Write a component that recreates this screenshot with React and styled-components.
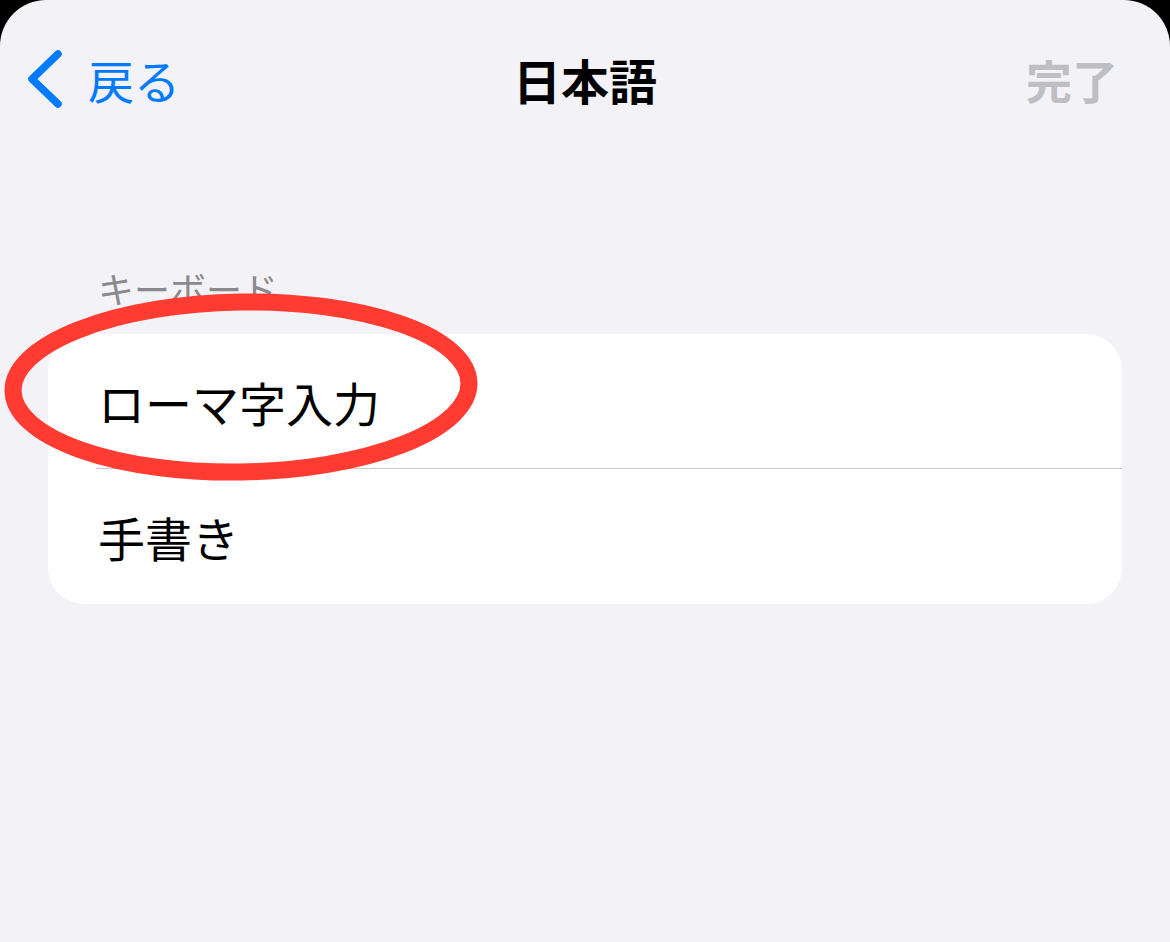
import React from 'react';
import styled, { createGlobalStyle } from 'styled-components';

const GlobalStyle = createGlobalStyle`
  html, body {
    margin: 0;
    padding: 0;
    background: #000;
  }
  body {
    font-family: "Noto Sans CJK JP", "Noto Sans", sans-serif;
  }
`;

const Screen = styled.div`
  position: relative;
  width: 1170px;
  height: 942px;
  background: #f2f2f7;
  border-radius: 46px 46px 0 0;
  overflow: hidden;
`;

const NavBar = styled.div`
  height: 164px;
  display: grid;
  grid-template-columns: 1fr auto 1fr;
  align-items: center;
  padding: 0 26px 6px;
  box-sizing: border-box;
`;

const BackButton = styled.div`
  display: flex;
  align-items: center;
  gap: 22px;
  color: #007aff;
  font-size: 46px;
  line-height: 1;
`;

const Title = styled.div`
  font-size: 48px;
  font-weight: 700;
  color: #000;
  line-height: 1;
`;

const DoneButton = styled.div`
  justify-self: end;
  margin-right: 26px;
  font-size: 46px;
  font-weight: 700;
  color: #bfbfc3;
  line-height: 1;
`;

const SectionHeader = styled.div`
  margin: 104px 0 0 98px;
  height: 40px;
  font-size: 36px;
  line-height: 40px;
  color: #8a8a8e;
`;

const Card = styled.div`
  margin: 26px 48px 0;
  background: #fff;
  border-radius: 36px;
  overflow: hidden;
`;

const Row = styled.div`
  height: 135px;
  display: flex;
  align-items: center;
  margin-left: 48px;
  padding-left: 2px;
  font-size: 47px;
  color: #000;
  border-bottom: ${p => (p.$last ? 'none' : '1.5px solid #c8c8cc')};
  box-sizing: border-box;
`;

const Circle = styled.svg`
  position: absolute;
  left: 0;
  top: 280px;
  pointer-events: none;
`;

const Chevron = () => (
  <svg width="40" height="60" viewBox="0 0 40 60">
    <path d="M32 5 L6 30 L32 55" fill="none" stroke="#007aff" strokeWidth="7.5" strokeLinecap="round" strokeLinejoin="round" />
  </svg>
);

export default function App() {
  return (
    <>
      <GlobalStyle />
      <Screen>
        <NavBar>
          <BackButton>
            <Chevron />
            <span>戻る</span>
          </BackButton>
          <Title>日本語</Title>
          <DoneButton>完了</DoneButton>
        </NavBar>
        <SectionHeader>キーボード</SectionHeader>
        <Card>
          <Row>ローマ字入力</Row>
          <Row $last>手書き</Row>
        </Card>
        <Circle width="500" height="220" viewBox="0 0 500 220">
          <ellipse cx="241" cy="107" rx="228" ry="85" fill="none" stroke="#ff3b32" strokeWidth="17" transform="rotate(-1 241 107)" />
        </Circle>
      </Screen>
    </>
  );
}
